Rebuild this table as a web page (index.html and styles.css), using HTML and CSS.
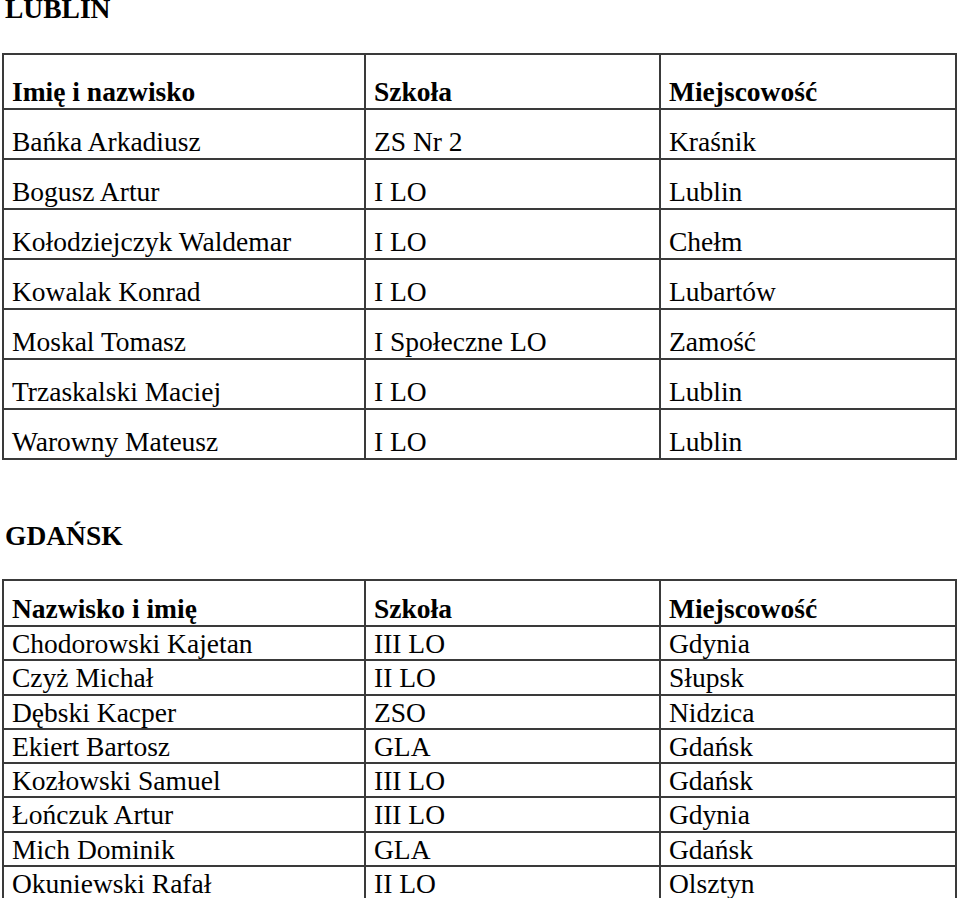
FILE: index.html
```html
<!DOCTYPE html>
<html lang="pl">
<head>
<meta charset="utf-8">
<title>Lublin / Gdańsk</title>
<link rel="stylesheet" href="styles.css">
</head>
<body>
<h2 class="city city-first">LUBLIN</h2>
<table class="list list-tall">
  <colgroup><col class="c1"><col class="c2"><col class="c3"></colgroup>
  <thead>
    <tr><th>Imię i nazwisko</th><th>Szkoła</th><th>Miejscowość</th></tr>
  </thead>
  <tbody>
    <tr><td>Bańka Arkadiusz</td><td>ZS Nr 2</td><td>Kraśnik</td></tr>
    <tr><td>Bogusz Artur</td><td>I LO</td><td>Lublin</td></tr>
    <tr><td>Kołodziejczyk Waldemar</td><td>I LO</td><td>Chełm</td></tr>
    <tr><td>Kowalak Konrad</td><td>I LO</td><td>Lubartów</td></tr>
    <tr><td>Moskal Tomasz</td><td>I Społeczne LO</td><td>Zamość</td></tr>
    <tr><td>Trzaskalski Maciej</td><td>I LO</td><td>Lublin</td></tr>
    <tr><td>Warowny Mateusz</td><td>I LO</td><td>Lublin</td></tr>
  </tbody>
</table>

<h2 class="city city-second">GDAŃSK</h2>
<table class="list list-compact">
  <colgroup><col class="c1"><col class="c2"><col class="c3"></colgroup>
  <thead>
    <tr><th>Nazwisko i imię</th><th>Szkoła</th><th>Miejscowość</th></tr>
  </thead>
  <tbody>
    <tr><td>Chodorowski Kajetan</td><td>III LO</td><td>Gdynia</td></tr>
    <tr><td>Czyż Michał</td><td>II LO</td><td>Słupsk</td></tr>
    <tr><td>Dębski Kacper</td><td>ZSO</td><td>Nidzica</td></tr>
    <tr><td>Ekiert Bartosz</td><td>GLA</td><td>Gdańsk</td></tr>
    <tr><td>Kozłowski Samuel</td><td>III LO</td><td>Gdańsk</td></tr>
    <tr><td>Łończuk Artur</td><td>III LO</td><td>Gdynia</td></tr>
    <tr><td>Mich Dominik</td><td>GLA</td><td>Gdańsk</td></tr>
    <tr><td>Okuniewski Rafał</td><td>II LO</td><td>Olsztyn</td></tr>
  </tbody>
</table>
</body>
</html>
```

FILE: styles.css
```css
html, body {
  margin: 0;
  padding: 0;
  background: #fff;
  color: #000;
  font-family: "Liberation Serif", "Times New Roman", serif;
}

.city {
  font-size: 27.5px;
  font-weight: bold;
  line-height: 30px;
  margin: 0 0 0 5px;
}

.city-first {
  margin-top: -6px;
  margin-bottom: 29px;
}

.city-second {
  margin-top: 61px;
  margin-bottom: 28px;
}

.list {
  border-collapse: collapse;
  table-layout: fixed;
  width: 955px;
  margin-left: 2px;
  font-size: 27.5px;
}

.list col.c1 { width: 362px; }
.list col.c2 { width: 295px; }
.list col.c3 { width: 296px; }

.list th,
.list td {
  border: 2px solid #3a3a3a;
  text-align: left;
  vertical-align: bottom;
  line-height: 30px;
  padding: 0 8px 1px 8px;
  white-space: nowrap;
}

.list th {
  font-weight: bold;
}

.list-tall th { padding-top: 22px; }
.list-tall td { padding-top: 17px; }

.list-compact th { padding-top: 13px; }
.list-compact td {
  padding-top: 1px;
  padding-bottom: 0;
  line-height: 31.25px;
}
```
